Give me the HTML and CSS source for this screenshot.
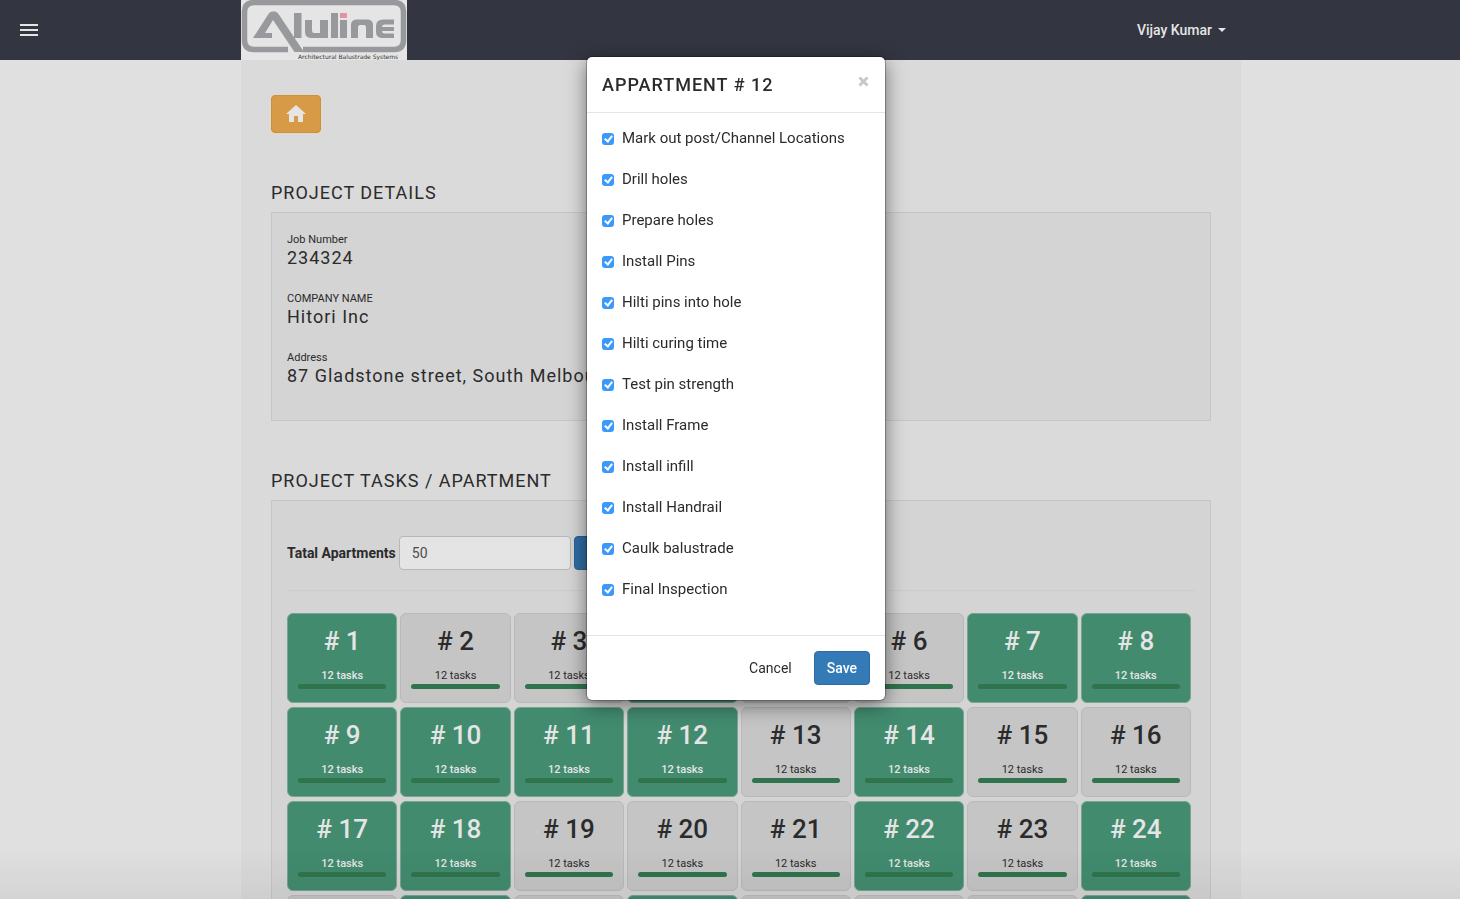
FILE: index.html
```html
<!DOCTYPE html>
<html lang="en">
<head>
<meta charset="utf-8">
<title>Aluline – Project details</title>
<link rel="stylesheet" href="styles.css">
</head>
<body>
<header class="topbar">
  <button class="menu-btn" type="button" aria-label="Menu">
    <svg width="18" height="12" viewBox="0 0 18 12" fill="#e5e5e5"><path d="M0 0h18v2H0zM0 5h18v2H0zM0 10h18v2H0z"/></svg>
  </button>
  <div class="topbar-inner">
    <a class="logo" href="#" aria-label="Aluline Architectural Balustrade Systems">
      <svg width="166" height="60" viewBox="0 0 166 60">
        <rect width="166" height="60" fill="#e5e5e5"/>
        <path d="M47 49.500H13Q3.500 49.500 3.500 40V12Q3.500 2.500 13 2.500H153Q162.500 2.500 162.500 12V40Q162.500 49.500 153 49.500H62" fill="none" stroke="#98999d" stroke-width="5.500"/>
        <path d="M12 38L27.500 14Q29 11.500 31 11.500H34Q36 11.500 37.500 14L63 52H53.500L32 20L24 33H31V38Z" fill="#98999d"/>
        <path d="M53 13h7.500v25H53zM64 20h7v10.500q0 2.500 2 2.500H79V20h8v18H71q-7 0-7-6zM90 13h7v25h-7zM99 20h7v18h-7zM110 38V25q0-5.500 6-5.500h10q6 0 6 5.500v13h-7V27q0-2-2-2h-4q-2 0-2 2v11zM153 38h-11q-7 0-7-6v-6q0-6.500 7-6.500h11v5h-9q-3 0-3 2.500h12v4h-12q0 2.500 3 2.500h9z" fill="#98999d"/>
        <path d="M99 13h7v5h-7z" fill="#e193a5"/>
        <text class="logo-tag" x="57" y="59" fill="#333">Architectural Balustrade Systems</text>
      </svg>
    </a>
    <button class="user-btn" type="button">Vijay Kumar <span class="caret"></span></button>
  </div>
</header>

<div class="content">
<main class="page">
  <a class="home-btn" href="#" aria-label="Home">
    <svg width="20" height="18" viewBox="0 0 20 18" fill="#e5e5e5"><path d="M8 17v-6h4v6h5V9h3L10 0 0 9h3v8z"/></svg>
  </a>

  <h2 class="section-title">Project Details</h2>
  <section class="well">
    <dl class="details">
      <div class="detail"><dt>Job Number</dt><dd>234324</dd></div>
      <div class="detail"><dt>COMPANY NAME</dt><dd>Hitori Inc</dd></div>
      <div class="detail"><dt>Address</dt><dd>87 Gladstone street, South Melbourne</dd></div>
    </dl>
  </section>

  <h2 class="section-title">Project Tasks / Apartment</h2>
  <section class="well tasks">
    <form class="total-form">
      <label for="total">Tatal Apartments</label>
      <input class="total-input" id="total" type="text" value="50">
      <button class="btn-update" type="button">Update</button>
    </form>
    <div class="tiles" id="tiles"></div>
  </section>
</main>
</div>

<div class="modal-layer">
  <form class="modal" role="dialog" aria-labelledby="modal-title">
    <div class="modal-head">
      <h1 class="modal-title" id="modal-title">Appartment # 12</h1>
      <button class="close" type="button" aria-label="Close"><svg width="11" height="11" viewBox="0 0 11 11" stroke="#c8c8c8" stroke-width="3"><path d="M1.500 1.500l8 8M9.500 1.500l-8 8"/></svg></button>
    </div>
    <div class="modal-body" id="checks"></div>
    <div class="modal-foot">
      <button class="btn-cancel" type="button">Cancel</button>
      <button class="btn-save" type="button">Save</button>
    </div>
  </form>
</div>
<script src="app.js"></script>
</body>
</html>
```

FILE: styles.css
```css
*, *::before { box-sizing: border-box; }
body {
  margin: 0;
  height: 100vh;
  overflow: hidden;
  background: #e0e0e0;
  color: #2b2b2b;
  font-family: Roboto, "Liberation Sans", sans-serif;
  font-size: 14px;
  line-height: 20px;
}
button, input { font: inherit; color: inherit; }
button { cursor: pointer; }

.topbar { position: relative; height: 60px; background: #333541; }
.topbar, .content { padding-left: 22px; }
.menu-btn {
  position: absolute;
  left: 20px;
  top: 24px;
  display: flex;
  padding: 0;
  border: 0;
  background: none;
}
.topbar-inner {
  display: flex;
  justify-content: space-between;
  align-items: center;
  max-width: 1000px;
  margin: 0 auto;
}
.logo { display: block; height: 60px; }
.logo svg { display: block; }
.logo-tag { font: 6px "DejaVu Sans", sans-serif; }
.user-btn {
  display: flex;
  align-items: center;
  gap: 6px;
  padding: 0 15px;
  border: 0;
  background: none;
  color: #e5e5e5;
  font-weight: 500;
}
.caret { border: 4px solid transparent; border-top-color: #e5e5e5; border-bottom: 0; }

.page {
  max-width: 1000px;
  margin: 0 auto;
  padding: 35px 30px 0;
  background: #dadada;
}
.home-btn {
  display: flex;
  align-items: center;
  justify-content: center;
  width: 50px;
  height: 38px;
  margin-bottom: 49px;
  border: 1px solid #d38f2c;
  border-radius: 4px;
  background: #d79b47;
}
.section-title {
  margin: 0 0 9px;
  font-size: 18px;
  line-height: 21px;
  font-weight: 400;
  letter-spacing: 1px;
  text-transform: uppercase;
}
.well {
  margin-bottom: 49px;
  padding: 15px;
  border: 1px solid #c6c6c6;
  background: #d4d4d4;
}
.details { margin: 0; padding-top: 5px; }
.detail { padding-bottom: 23px; }
.detail:last-child { padding-bottom: 18px; }
.detail dt { font-size: 11px; line-height: 14px; }
.detail dd { margin: 0; font-size: 18px; line-height: 22px; letter-spacing: 1px; }

.total-form {
  display: flex;
  align-items: center;
  gap: 3px;
  margin-bottom: 22px;
  padding: 20px 0;
  border-bottom: 1px solid #cccccc;
}
.total-form label { font-weight: 700; }
.total-input {
  width: 172px;
  height: 34px;
  padding: 6px 12px;
  border: 1px solid #b7b7b7;
  border-radius: 4px;
  background: #e4e4e4;
  color: #4c4c4c;
}
.btn-update {
  height: 34px;
  padding: 6px 14px;
  border: 1px solid #296092;
  border-radius: 4px;
  background: #2f6da4;
  color: #e5e5e5;
}
.tiles {
  display: grid;
  grid-template-columns: repeat(8, 1fr);
  gap: 4px 3px;
  padding-right: 4px;
}
.tile {
  display: block;
  height: 90px;
  padding: 12px 10px 0;
  border: 1px solid #b9b9b9;
  border-radius: 6px;
  background: #c5c5c5;
  text-align: center;
}
.tile.done { border-color: #76a590; background: #428b6f; color: #e5e5e5; }
.tile-no { display: block; font-size: 26px; line-height: 30px; font-weight: 500; }
.tile-tasks { display: block; margin-top: 12px; font-size: 11px; line-height: 16px; }
.done .tile-tasks { font-weight: 500; }
.tile-bar { display: block; height: 5px; border-radius: 3px; background: #30744d; }

.modal-layer {
  position: fixed;
  inset: 0;
  padding: 57px 0 0 12px;
  background: linear-gradient(to top, rgba(0, 0, 0, .05), transparent 50px);
}
.modal {
  width: 298px;
  margin: 0 auto;
  border-radius: 5px;
  background: #fff;
  box-shadow: 0 0 1px 1px rgba(0, 0, 0, .3), 0 5px 20px rgba(0, 0, 0, .5);
}
.modal-head {
  display: flex;
  justify-content: space-between;
  padding: 15px 16px 15px 15px;
  border-bottom: 1px solid #e5e5e5;
}
.modal-title {
  margin: 0;
  font-size: 18px;
  line-height: 25px;
  font-weight: 500;
  letter-spacing: 1px;
  text-transform: uppercase;
}
.close { align-self: flex-start; display: flex; padding: 4px 0; border: 0; background: none; }
.modal-body { padding: 15px; }
.check {
  display: flex;
  align-items: center;
  gap: 8px;
  margin-bottom: 21px;
  font-size: 15px;
  line-height: 20px;
}
.check input {
  appearance: none;
  display: grid;
  justify-content: center;
  width: 12px;
  height: 12px;
  margin: 2px 0 0;
  border-radius: 3px;
  background: #3b99fc;
}
.check input:checked::before {
  content: "";
  width: 5px;
  height: 8px;
  margin-top: 1px;
  border: solid #fff;
  border-width: 0 2px 2px 0;
  transform: rotate(38deg);
}
.modal-foot {
  display: flex;
  justify-content: flex-end;
  gap: 9px;
  padding: 15px;
  border-top: 1px solid #e5e5e5;
}
.btn-cancel, .btn-save {
  height: 34px;
  padding: 0 12px;
  border: 1px solid transparent;
  border-radius: 4px;
  background: none;
}
.btn-save { border-color: #2e6da4; background: #337ab7; color: #fff; font-weight: 500; }
```

FILE: app.js
```js
const done = new Set([1, 4, 7, 8, 9, 10, 11, 12, 14, 17, 18, 22, 24, 26, 28, 32]);
const total = 32;
document.getElementById('tiles').innerHTML = Array.from({ length: total }, (_, i) => i + 1)
  .map(n => `<div class="tile${done.has(n) ? ' done' : ''}"><span class="tile-no"># ${n}</span><span class="tile-tasks">12 tasks</span><span class="tile-bar"></span></div>`)
  .join('');

const steps = ['Mark out post/Channel Locations', 'Drill holes', 'Prepare holes', 'Install Pins',
  'Hilti pins into hole', 'Hilti curing time', 'Test pin strength', 'Install Frame',
  'Install infill', 'Install Handrail', 'Caulk balustrade', 'Final Inspection'];
document.getElementById('checks').innerHTML = steps
  .map((s, i) => `<div class="check"><input type="checkbox" id="step${i}" checked><label for="step${i}">${s}</label></div>`)
  .join('');
```
